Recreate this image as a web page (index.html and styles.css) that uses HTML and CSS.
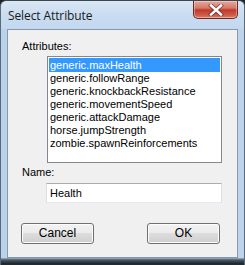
FILE: index.html
```html
<!DOCTYPE html>
<html>
<head>
<meta charset="utf-8">
<link rel="stylesheet" href="styles.css">
</head>
<body>
<div class="window">
  <div class="titlebar">
    <span class="title">Select Attribute</span>
    <div class="close">
      <svg width="18" height="12" viewBox="0 0 18 12">
        <path d="M4 1.5 L14 10.5 M14 1.5 L4 10.5" stroke="#3a2020" stroke-width="4.2" stroke-linecap="square" fill="none" opacity="0.55"/>
        <path d="M4 1.5 L14 10.5 M14 1.5 L4 10.5" stroke="#ffffff" stroke-width="2.4" stroke-linecap="square" fill="none"/>
      </svg>
    </div>
  </div>
  <div class="client">
    <div class="label">Attributes:</div>
    <div class="listbox">
      <div class="item selected">generic.maxHealth</div>
      <div class="item">generic.followRange</div>
      <div class="item">generic.knockbackResistance</div>
      <div class="item">generic.movementSpeed</div>
      <div class="item">generic.attackDamage</div>
      <div class="item">horse.jumpStrength</div>
      <div class="item">zombie.spawnReinforcements</div>
    </div>
    <div class="label name-label">Name:</div>
    <div class="textbox">Health</div>
    <div class="buttons">
      <div class="button">Cancel</div>
      <div class="button">OK</div>
    </div>
  </div>
  <div class="bottomframe"></div>
</div>
</body>
</html>
```

FILE: styles.css
```css
html, body {
  margin: 0;
  padding: 0;
  background: #1c2328;
}
body {
  width: 245px;
  height: 265px;
  overflow: hidden;
  font-family: "Liberation Sans", Arial, sans-serif;
  font-size: 11px;
  color: #000;
}
.window {
  width: 245px;
  height: 265px;
  box-sizing: border-box;
  display: flex;
  flex-direction: column;
  background: linear-gradient(to right, #b9d1ea 0px, #c8dcf1 30px, #c4d9f0 200px, #bcd3ec 245px);
  border-top: 1px solid #3c4650;
  border-left: 1px solid #5c6a78;
  border-right: 1px solid #5c6a78;
  border-radius: 6px 6px 0 0;
}
.titlebar {
  height: 28px;
  display: flex;
  justify-content: space-between;
  align-items: flex-start;
  background: linear-gradient(to bottom, #dbe7f4 0px, #c9dcf1 14px, #c3d8ef 28px);
  border-radius: 6px 6px 0 0;
}
.title {
  font-family: "Open Sans", "Liberation Sans", sans-serif;
  font-size: 12px;
  margin: 6px 0 0 7px;
  color: #1a1a1a;
  letter-spacing: -0.1px;
}
.close {
  width: 45px;
  height: 18px;
  margin-right: 6px;
  box-sizing: border-box;
  border: 1px solid #6b2a22;
  border-top: none;
  border-radius: 0 0 5px 5px;
  background: linear-gradient(to bottom, #e6a89b 0px, #d57a68 7px, #c0392b 9px, #cd5b45 14px, #e58a70 18px);
  display: flex;
  align-items: center;
  justify-content: center;
  box-shadow: inset 0 0 0 1px rgba(255,255,255,0.35);
}
.client {
  margin: 0 6px;
  height: 229px;
  box-sizing: border-box;
  background: #f0f0f0;
  border: 1px solid #8798ab;
  padding: 10px 0 0 14px;
  display: flex;
  flex-direction: column;
  align-items: flex-start;
}
.label {
  height: 13px;
  line-height: 13px;
}
.listbox {
  margin: 3px 0 0 25px;
  width: 175px;
  height: 107px;
  box-sizing: border-box;
  border: 1px solid #828790;
  background: #fff;
  padding: 1px;
}
.item {
  height: 13px;
  line-height: 13px;
  padding-left: 1px;
  white-space: nowrap;
}
.item.selected {
  background: #3399ff;
  color: #fff;
  height: 14px;
  line-height: 14px;
}
.name-label {
  margin-top: 3px;
}
.textbox {
  margin: 4px 0 0 24px;
  width: 176px;
  height: 20px;
  box-sizing: border-box;
  border: 1px solid #abadb3;
  border-left-color: #dbdfe6;
  border-right-color: #dbdfe6;
  border-bottom-color: #e3e9ef;
  background: #fff;
  line-height: 18px;
  padding-left: 3px;
}
.buttons {
  margin: 20px 0 0 -1px;
  display: flex;
  gap: 53px;
}
.button {
  width: 73px;
  height: 21px;
  box-sizing: border-box;
  border: 1px solid #707070;
  border-radius: 3px;
  background: linear-gradient(to bottom, #f2f2f2 0%, #ebebeb 50%, #dddddd 50%, #cfcfcf 100%);
  box-shadow: inset 0 0 0 1px #fcfcfc;
  text-align: center;
  line-height: 19px;
  font-size: 12px;
}
.bottomframe {
  flex: 1;
  background: linear-gradient(to bottom, #9fb3c8 0px, #4a5a66 2px, #1a2228 6px, #3a4550 8px);
}
```
